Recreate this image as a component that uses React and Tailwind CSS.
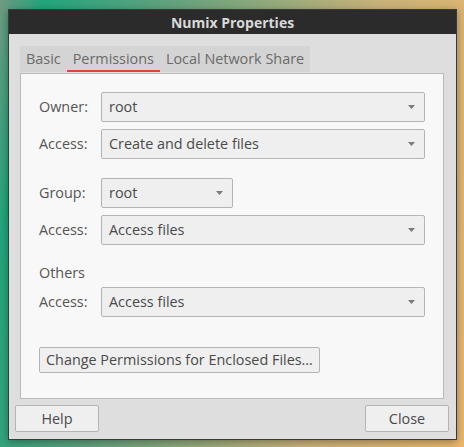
import React from "react";

const font = { fontFamily: '"Open Sans", "Noto Sans", sans-serif' };

function Arrow() {
  return (
    <svg width="7" height="4" viewBox="0 0 7 4" className="shrink-0">
      <path d="M0 0 H7 L3.5 4 Z" fill="#7a7a7a" />
    </svg>
  );
}

function Combo({ value, className = "" }) {
  return (
    <div
      className={`h-[30px] flex items-center justify-between pl-[7px] pr-[9px] bg-[#efefef] border border-[#b4b4b4] rounded-[2px] text-[#4a4a4a] ${className}`}
    >
      <span>{value}</span>
      <Arrow />
    </div>
  );
}

function Row({ label, value, comboClass = "flex-1" }) {
  return (
    <div className="flex items-center">
      <div className="w-[62px] shrink-0 text-[#555]">{label}</div>
      <Combo value={value} className={comboClass} />
    </div>
  );
}

export default function App() {
  return (
    <div
      className="w-[464px] h-[447px] pl-[8px] pt-[9px] bg-[linear-gradient(100deg,#6f9a82_0%,#22a57c_8%,#5fa27e_30%,#c9b27a_70%,#eab76a_100%)] text-[14.4px]"
      style={font}
    >
      <div className="w-[449px] h-[431px] flex flex-col bg-[#dedede] border border-[#3a3a3a] shadow-[0_2px_8px_rgba(0,0,0,0.35)]">
        <div className="h-[24px] bg-[#2b2b2b] flex items-center justify-center text-[#d9d9d9] font-bold text-[14px]">
          Numix Properties
        </div>

        <div className="flex-1 flex flex-col pl-[11px] pr-[12px] pt-[12px]">
          <div className="flex self-start h-[26px] bg-[#d4d4d4] text-[#6a6a6a]">
            <div className="px-[6px] flex items-center">Basic</div>
            <div className="px-[6px] flex items-center border-b-2 border-[#d64937] pt-[2px]">Permissions</div>
            <div className="px-[6px] flex items-center">Local Network Share</div>
          </div>

          <div className="mt-[1px] h-[326px] bg-[#f8f8f8] border border-[#b9b9b9] pl-[18px] pr-[18px] pt-[18px] flex flex-col">
            <div className="flex flex-col gap-[7px]">
              <Row label="Owner:" value="root" />
              <Row label="Access:" value="Create and delete files" />
            </div>
            <div className="flex flex-col gap-[7px] mt-[19px]">
              <Row label="Group:" value="root" comboClass="w-[132px]" />
              <Row label="Access:" value="Access files" />
            </div>
            <div className="mt-[18px] h-[20px] flex items-center text-[#555]">Others</div>
            <div className="mt-[4px]">
              <Row label="Access:" value="Access files" />
            </div>
            <div className="mt-[30px]">
              <button className="h-[26px] px-[6px] bg-[#efefef] border border-[#b4b4b4] rounded-[2px] text-[#4a4a4a]">
                Change Permissions for Enclosed Files…
              </button>
            </div>
          </div>

          <div className="flex justify-between mt-[6px]">
            <button className="-ml-[5px] w-[84px] h-[27px] bg-[#efefef] border border-[#b4b4b4] rounded-[2px] text-[#4a4a4a]">
              Help
            </button>
            <button className="-mr-[5px] w-[84px] h-[27px] bg-[#efefef] border border-[#b4b4b4] rounded-[2px] text-[#4a4a4a]">
              Close
            </button>
          </div>
        </div>
      </div>
    </div>
  );
}
